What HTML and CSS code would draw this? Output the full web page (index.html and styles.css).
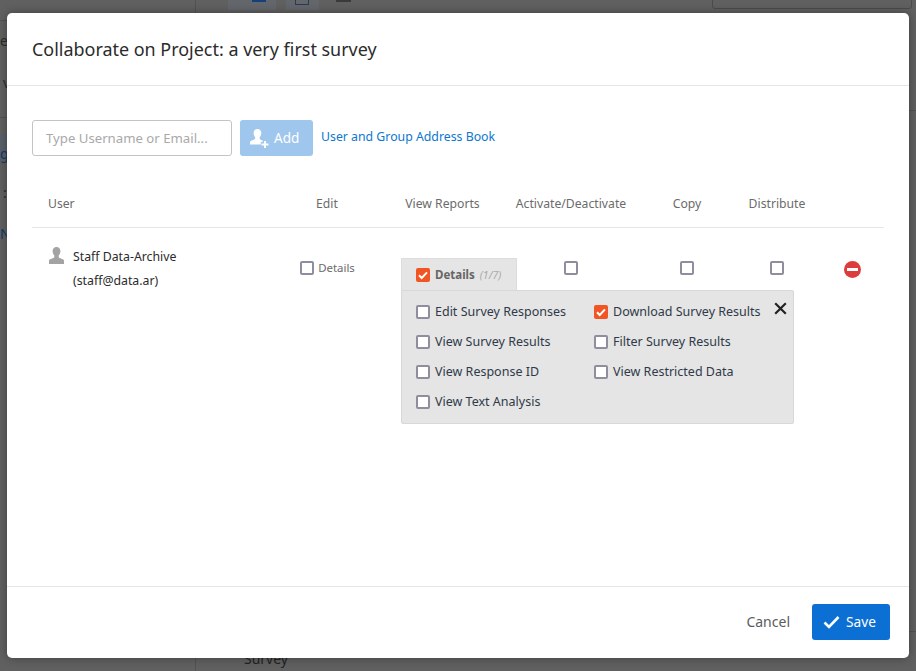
FILE: index.html
```html
<!DOCTYPE html>
<html lang="en">
<head>
    <meta charset="UTF-8">
    <meta name="viewport" content="width=device-width, initial-scale=1.0">
    <title>Collaborate on Project</title>
    <link rel="stylesheet" href="styles.css">
</head>
<body>

    <!-- page behind the dimmed overlay -->
    <div class="backdrop">
        <span class="bg-line bg-line-v"></span>
        <span class="bg-line bg-line-a"></span>
        <span class="bg-line bg-line-b"></span>
        <span class="bg-line bg-line-c"></span>
        <span class="bg-line bg-line-d"></span>
        <span class="bg-tab bg-tab-a"></span>
        <span class="bg-tab bg-tab-b"></span>
        <span class="bg-icon bg-icon-a"></span>
        <span class="bg-icon bg-icon-b"></span>
        <span class="bg-icon bg-icon-c"></span>
        <span class="bg-box"></span>
        <span class="bg-band"></span>
        <span class="bg-text bg-text-a">e</span>
        <span class="bg-text bg-text-b">v</span>
        <span class="bg-text bg-text-c">g</span>
        <span class="bg-text bg-text-d">:</span>
        <span class="bg-text bg-text-e">N</span>
        <span class="bg-text bg-text-f">Survey</span>
    </div>

    <div class="modal">
        <div class="modal-header">
            <h2>Collaborate on Project: a very first survey</h2>
        </div>

        <div class="modal-body">
            <div class="add-row">
                <input type="text" class="user-input" placeholder="Type Username or Email...">
                <button class="add-btn">
                    <svg class="add-icon" width="20" height="20" viewBox="0 0 20 20">
                        <path fill="#fff" d="M8.500 1c2.400 0 3.800 1.700 3.800 4 0 1.700-.6 3.200-1.600 4.200v1.600c0 .5.300.8.900 1l2 .8v1.400h-1.800v2.500H1v-2.200c0-.8.400-1.300 1.200-1.600l3-1.300c.6-.2.900-.5.900-1V9.200C5.200 8.200 4.600 6.700 4.600 5c0-2.300 1.500-4 3.900-4z"/>
                        <path fill="#fff" d="M15 13h2v2.500h2.500v2H17V20h-2v-2.500h-2.500v-2H15z"/>
                    </svg>
                    Add
                </button>
                <a class="book-link" href="#">User and Group Address Book</a>
            </div>

            <div class="perm-table perm-head">
                <div class="col-user">User</div>
                <div>Edit</div>
                <div>View Reports</div>
                <div>Activate/Deactivate</div>
                <div>Copy</div>
                <div>Distribute</div>
                <div></div>
            </div>

            <div class="perm-table perm-row">
                <div class="user-cell">
                    <svg class="user-icon" width="17" height="17" viewBox="0 0 17 17">
                        <path fill="#a3a3a3" d="M8.500 0c2.500 0 3.900 1.700 3.900 4.100 0 1.800-.6 3.300-1.700 4.400v1.500c0 .5.300.8.900 1l3.200 1.300c.8.300 1.200.8 1.200 1.600V17H1v-3.100c0-.8.400-1.300 1.200-1.600l3.200-1.300c.6-.2.900-.5.900-1V8.500C5.200 7.400 4.600 5.900 4.600 4.100 4.600 1.700 6 0 8.500 0z"/>
                    </svg>
                    <div class="user-name">
                        <div>Staff Data-Archive</div>
                        <div>(staff@data.ar)</div>
                    </div>
                </div>
                <div class="cell">
                    <label class="check-label edit-details"><span class="check"></span>Details</label>
                </div>
                <div class="cell reports-cell">
                    <div class="details-pop">
                        <div class="details-tab">
                            <span class="check checked"><svg viewBox="0 0 14 14" width="14" height="14"><path d="M3 7.300l2.700 2.700L11 4.400" fill="none" stroke="#fff" stroke-width="2"/></svg></span>
                            <b>Details</b> <i>(1/7)</i>
                        </div>
                        <div class="details-panel">
                            <svg class="close-x" width="13" height="13" viewBox="0 0 13 13"><path d="M1.200 1.200l10.600 10.600M11.800 1.200L1.200 11.800" stroke="#222" stroke-width="2.200" fill="none"/></svg>
                            <label class="check-label"><span class="check"></span>Edit Survey Responses</label>
                            <label class="check-label"><span class="check checked"><svg viewBox="0 0 14 14" width="14" height="14"><path d="M3 7.300l2.700 2.700L11 4.400" fill="none" stroke="#fff" stroke-width="2"/></svg></span>Download Survey Results</label>
                            <label class="check-label"><span class="check"></span>View Survey Results</label>
                            <label class="check-label"><span class="check"></span>Filter Survey Results</label>
                            <label class="check-label"><span class="check"></span>View Response ID</label>
                            <label class="check-label"><span class="check"></span>View Restricted Data</label>
                            <label class="check-label"><span class="check"></span>View Text Analysis</label>
                        </div>
                    </div>
                </div>
                <div class="cell"><span class="check"></span></div>
                <div class="cell"><span class="check"></span></div>
                <div class="cell"><span class="check"></span></div>
                <div class="cell remove-cell">
                    <svg class="remove-icon" width="17" height="17" viewBox="0 0 17 17">
                        <circle cx="8.500" cy="8.500" r="8.500" fill="#dd3c3c"/>
                        <rect x="3" y="7" width="11" height="3" fill="#fff"/>
                    </svg>
                </div>
            </div>
        </div>

        <div class="modal-footer">
            <a class="cancel" href="#">Cancel</a>
            <button class="save-btn">
                <svg width="17" height="14" viewBox="0 0 17 14"><path d="M1.500 7.500l4.500 4.500L15.500 2" fill="none" stroke="#fff" stroke-width="2.600"/></svg>
                Save
            </button>
        </div>
    </div>

</body>
</html>
```

FILE: styles.css
```css
* {
    box-sizing: border-box;
}
body {
    font-family: "Noto Sans", Arial, sans-serif;
    margin: 0;
    width: 916px;
    height: 671px;
    overflow: hidden;
    background-color: #5c5c5c;
}

/* dimmed page */
.backdrop {
    position: absolute;
    top: 0;
    left: 0;
    width: 916px;
    height: 671px;
    background-color: #606060;
    overflow: hidden;
}
.bg-line {
    position: absolute;
    background-color: #525252;
}
.bg-line-v {
    left: 195px;
    top: 0;
    width: 1px;
    height: 671px;
}
.bg-line-a {
    left: 0;
    top: 20px;
    width: 8px;
    height: 1px;
}
.bg-line-b {
    left: 0;
    top: 117px;
    width: 8px;
    height: 1px;
}
.bg-line-c {
    left: 908px;
    top: 110px;
    width: 8px;
    height: 1px;
}
.bg-line-d {
    left: 908px;
    top: 631px;
    width: 8px;
    height: 1px;
}
.bg-tab {
    position: absolute;
    top: 0;
    height: 10px;
    background-color: #63676b;
}
.bg-tab-a {
    left: 228px;
    width: 48px;
}
.bg-tab-b {
    left: 286px;
    width: 33px;
}
.bg-icon {
    position: absolute;
    top: 0;
}
.bg-icon-a {
    left: 252px;
    width: 14px;
    height: 2px;
    background-color: #17407a;
}
.bg-icon-b {
    left: 295px;
    top: -8px;
    width: 14px;
    height: 13px;
    border: 1px solid #2a3a52;
}
.bg-icon-c {
    left: 336px;
    width: 15px;
    height: 2px;
    background-color: #3a3a3a;
}
.bg-box {
    position: absolute;
    left: 712px;
    top: -20px;
    width: 200px;
    height: 29px;
    border: 1px solid #4b4b4b;
    border-radius: 3px;
}
.bg-band {
    position: absolute;
    left: 0;
    top: 134px;
    width: 8px;
    height: 26px;
    background-color: #586069;
}
.bg-text {
    position: absolute;
    font-size: 14px;
    line-height: 16px;
    color: #23364d;
}
.bg-text-a { left: 0; top: 33px; color: #2b2b2b; }
.bg-text-b { left: 3px; top: 75px; color: #2b2b2b; }
.bg-text-c { left: 0; top: 146px; color: #123a68; }
.bg-text-d { left: 3px; top: 185px; color: #2b2b2b; }
.bg-text-e { left: 0; top: 226px; color: #123a68; }
.bg-text-f { left: 244px; top: 651px; color: #222; }

.modal {
    position: absolute;
    left: 7px;
    top: 13px;
    width: 902px;
    height: 645px;
    display: flex;
    flex-direction: column;
    background-color: #fff;
    border-radius: 5px;
    box-shadow: 0px 0px 10px rgba(0, 0, 0, 0.35);
}
.modal-header {
    height: 73px;
    padding: 0 25px;
    display: flex;
    align-items: center;
    border-bottom: 1px solid #e6e6e6;
}
h2 {
    margin: 0 0 1px;
    font-size: 17.95px;
    font-weight: 400;
    color: #2b2b2b;
}
.modal-body {
    flex: 1;
    padding: 34px 25px 0;
}
.add-row {
    display: flex;
    align-items: flex-start;
    gap: 8px;
}
.user-input {
    width: 200px;
    height: 36px;
    padding: 0 13px 1px;
    font-family: inherit;
    font-size: 13.2px;
    border: 1px solid #c4c4c4;
    border-radius: 3px;
}
.user-input::placeholder {
    color: #a9a9a9;
    opacity: 1;
}
.add-btn {
    width: 73px;
    height: 36px;
    padding: 0 0 0 9px;
    display: flex;
    align-items: center;
    gap: 5px;
    font-family: inherit;
    font-size: 13.5px;
    color: #fff;
    background-color: #9fc6ec;
    border: 0;
    border-radius: 3px;
}
.book-link {
    margin-top: 8px;
    font-size: 12.3px;
    line-height: 18px;
    color: #0b78d0;
    text-decoration: none;
}
.perm-table {
    display: grid;
    grid-template-columns: 240px 110px 121px 136px 96px 84px 65px;
    width: 852px;
}
.perm-head {
    height: 72px;
    align-items: center;
    padding-top: 23px;
    border-bottom: 1px solid #e6e6e6;
    font-size: 12.2px;
    color: #6b6b6b;
    text-align: center;
}
.col-user {
    padding-left: 16px;
    text-align: left;
}
.perm-row {
    padding-top: 20px;
}
.user-cell {
    display: flex;
    align-items: flex-start;
    padding-left: 16px;
    gap: 8px;
    margin-top: -1px;
}
.user-icon {
    flex: none;
}
.user-name {
    margin-top: -2px;
    font-size: 12.3px;
    line-height: 24px;
    color: #2b2b2b;
}
.cell {
    display: flex;
    justify-content: center;
    align-items: flex-start;
    height: 40px;
    padding-top: 13px;
}
.remove-cell {
    padding-left: 2px;
}
.check {
    flex: none;
    width: 14px;
    height: 14px;
    display: block;
    background-color: #fff;
    border: 2px solid #8e8e9e;
    border-radius: 2px;
}
.check.checked {
    background-color: #f05523;
    border: 0;
}
.check-label {
    display: flex;
    align-items: center;
    gap: 5px;
    font-size: 12.5px;
    line-height: 14px;
    color: #2f3a48;
}
.edit-details {
    gap: 4px;
    padding-left: 1px;
    font-size: 11.4px;
    color: #6b6b6b;
}
.reports-cell {
    position: relative;
}
.details-pop {
    position: absolute;
    left: 19px;
    top: 10px;
    width: 393px;
}
.details-tab {
    width: 116px;
    height: 32px;
    display: flex;
    align-items: center;
    gap: 5px;
    padding: 0 0 0 14px;
    font-size: 11.5px;
    color: #666;
    background-color: #e5e5e5;
    border: 1px solid #dcdcdc;
    border-bottom: 0;
}
.details-tab i {
    font-size: 10.5px;
    color: #aaa;
}
.details-panel {
    position: relative;
    height: 134px;
    display: grid;
    grid-template-columns: 178px 178px;
    grid-auto-rows: 30px;
    align-items: center;
    padding: 6px 0 0 14px;
    background-color: #e5e5e5;
    border: 1px solid #d8d8d8;
    border-radius: 0 2px 2px 2px;
}
.close-x {
    position: absolute;
    top: 11px;
    right: 6px;
}
.modal-footer {
    height: 72px;
    display: flex;
    align-items: center;
    justify-content: flex-end;
    gap: 22px;
    padding: 0 19px 2px 0;
    border-top: 1px solid #e6e6e6;
}
.cancel {
    font-size: 14px;
    color: #5c5c5c;
    text-decoration: none;
}
.save-btn {
    width: 78px;
    height: 36px;
    display: flex;
    align-items: center;
    gap: 6px;
    padding: 0 0 0 11px;
    font-family: inherit;
    font-size: 13.7px;
    color: #fff;
    background-color: #0b6fd3;
    border: 0;
    border-radius: 3px;
}
```
